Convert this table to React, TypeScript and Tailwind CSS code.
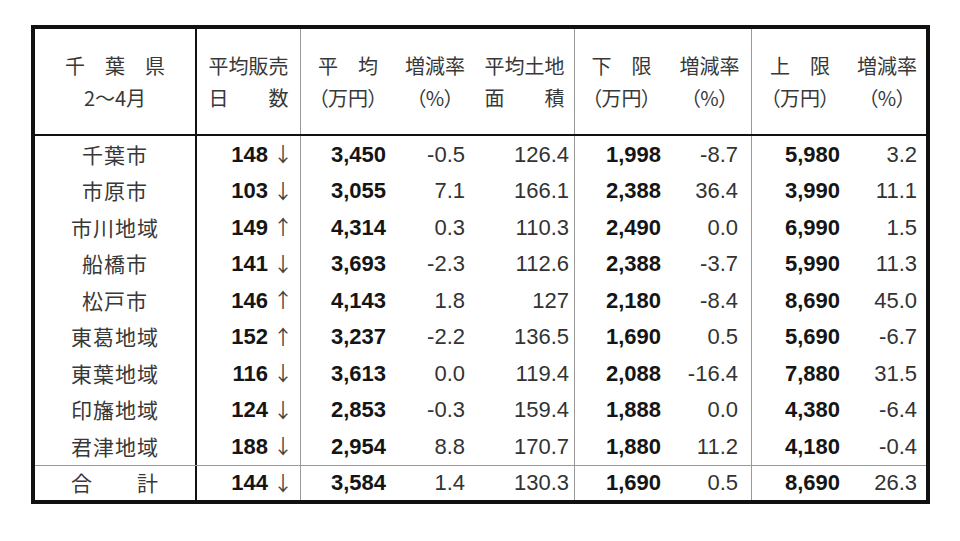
const JP = "font-['Noto_Sans_CJK_JP',sans-serif]";
const NUM = "font-['Liberation_Sans','Noto_Sans_CJK_JP',sans-serif]";

type Row = {
  name: string;
  days: string;
  dir: "up" | "down";
  avg: string;
  avgRate: string;
  land: string;
  low: string;
  lowRate: string;
  high: string;
  highRate: string;
};

const rows: Row[] = [
  { name: "千葉市", days: "148", dir: "down", avg: "3,450", avgRate: "-0.5", land: "126.4", low: "1,998", lowRate: "-8.7", high: "5,980", highRate: "3.2" },
  { name: "市原市", days: "103", dir: "down", avg: "3,055", avgRate: "7.1", land: "166.1", low: "2,388", lowRate: "36.4", high: "3,990", highRate: "11.1" },
  { name: "市川地域", days: "149", dir: "up", avg: "4,314", avgRate: "0.3", land: "110.3", low: "2,490", lowRate: "0.0", high: "6,990", highRate: "1.5" },
  { name: "船橋市", days: "141", dir: "down", avg: "3,693", avgRate: "-2.3", land: "112.6", low: "2,388", lowRate: "-3.7", high: "5,990", highRate: "11.3" },
  { name: "松戸市", days: "146", dir: "up", avg: "4,143", avgRate: "1.8", land: "127", low: "2,180", lowRate: "-8.4", high: "8,690", highRate: "45.0" },
  { name: "東葛地域", days: "152", dir: "up", avg: "3,237", avgRate: "-2.2", land: "136.5", low: "1,690", lowRate: "0.5", high: "5,690", highRate: "-6.7" },
  { name: "東葉地域", days: "116", dir: "down", avg: "3,613", avgRate: "0.0", land: "119.4", low: "2,088", lowRate: "-16.4", high: "7,880", highRate: "31.5" },
  { name: "印旛地域", days: "124", dir: "down", avg: "2,853", avgRate: "-0.3", land: "159.4", low: "1,888", lowRate: "0.0", high: "4,380", highRate: "-6.4" },
  { name: "君津地域", days: "188", dir: "down", avg: "2,954", avgRate: "8.8", land: "170.7", low: "1,880", lowRate: "11.2", high: "4,180", highRate: "-0.4" },
];

const total: Row = { name: "合　　計", days: "144", dir: "down", avg: "3,584", avgRate: "1.4", land: "130.3", low: "1,690", lowRate: "0.5", high: "8,690", highRate: "26.3" };

const grid = "grid grid-cols-[160px_105px_95px_80px_99px_94px_83px_97px_78px]";

function HeadCell({ top, bottom, className = "", palt = false }: { top: string; bottom: string; className?: string; palt?: boolean }) {
  return (
    <div className={`flex flex-col items-center justify-center text-[20px] leading-[32px] text-[#383838] ${JP} ${className}`}>
      <span className="whitespace-pre">{top}</span>
      <span className={`whitespace-pre ${palt ? "[font-feature-settings:'palt']" : ""}`}>{bottom}</span>
    </div>
  );
}

function DataRow({ r, className = "" }: { r: Row; className?: string }) {
  const bold = `${NUM} text-[22px] font-bold text-[#151515]`;
  const thin = `${NUM} text-[22px] text-[#333]`;
  return (
    <div className={`${grid} ${className}`}>
      <div className={`flex items-center justify-center text-[21px] tracking-[1px] text-[#383838] whitespace-pre ${JP}`}>{r.name}</div>
      <div className="flex items-center justify-end border-l-2 border-[#111] pr-[9px]">
        <span className={bold}>{r.days}</span>
        <span className={`ml-[5px] w-[18px] text-center text-[20px] text-[#444] ${JP}`}>{r.dir === "up" ? "↑" : "↓"}</span>
      </div>
      <div className={`flex items-center justify-end border-l border-[#999] pr-[9px] ${bold}`}>{r.avg}</div>
      <div className={`flex items-center justify-end pr-[10px] ${thin}`}>{r.avgRate}</div>
      <div className={`flex items-center justify-end pr-[5px] ${thin}`}>{r.land}</div>
      <div className={`flex items-center justify-end border-l border-[#999] pr-[7px] ${bold}`}>{r.low}</div>
      <div className={`flex items-center justify-end pr-[13px] ${thin}`}>{r.lowRate}</div>
      <div className={`flex items-center justify-end border-l border-[#999] pr-[8px] ${bold}`}>{r.high}</div>
      <div className={`flex items-center justify-end pr-[9px] ${thin}`}>{r.highRate}</div>
    </div>
  );
}

export default function App() {
  return (
    <div className="h-[541px] w-[960px] bg-white pl-[31px] pt-[25px]">
      <div className="w-[899px] border-4 border-[#111]">
        <div className={`${grid} h-[107px] border-b-2 border-[#111]`}>
          <HeadCell top="千　葉　県" bottom="2～4月" />
          <HeadCell top="平均販売" bottom="日　　数" className="border-l-2 border-[#111]" />
          <HeadCell top="平　均" bottom="（万円）" className="border-l border-[#999]" palt />
          <HeadCell top="増減率" bottom="（%）" palt />
          <HeadCell top="平均土地" bottom="面　　積" />
          <HeadCell top="下　限" bottom="（万円）" className="border-l border-[#999]" palt />
          <HeadCell top="増減率" bottom="（%）" palt />
          <HeadCell top="上　限" bottom="（万円）" className="border-l border-[#999]" palt />
          <HeadCell top="増減率" bottom="（%）" palt />
        </div>
        {rows.map((r) => (
          <DataRow key={r.name} r={r} className="h-[36.5px]" />
        ))}
        <DataRow r={total} className="h-[35px] border-t border-[#999]" />
      </div>
    </div>
  );
}
